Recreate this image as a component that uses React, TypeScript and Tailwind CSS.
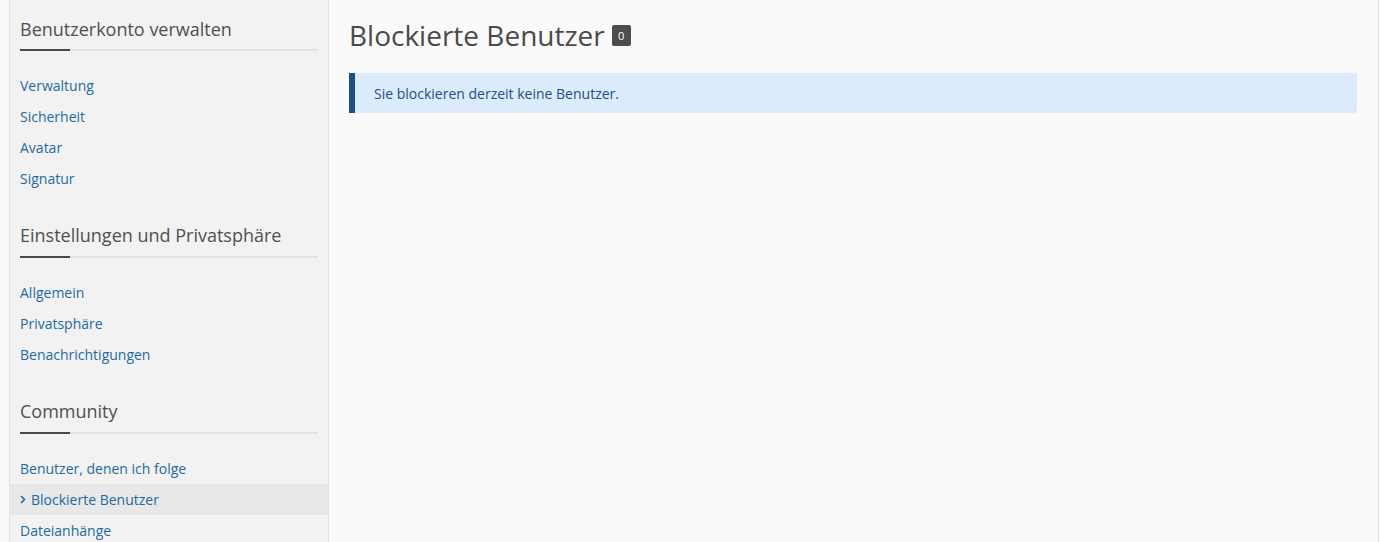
const sections = [
  {
    title: "Benutzerkonto verwalten",
    links: ["Verwaltung", "Sicherheit", "Avatar", "Signatur"],
  },
  {
    title: "Einstellungen und Privatsphäre",
    links: ["Allgemein", "Privatsphäre", "Benachrichtigungen"],
  },
  {
    title: "Community",
    links: ["Benutzer, denen ich folge", "Blockierte Benutzer", "Dateianhänge"],
  },
];

const ACTIVE = "Blockierte Benutzer";

function SidebarSection({ title, links, first }: { title: string; links: string[]; first: boolean }) {
  return (
    <div className={first ? "pt-[17px]" : "pt-[29px]"}>
      <div className="px-[10px]">
        <h2 className={`text-[18px] leading-[24px] text-[#505050] ${first ? "pb-[8px]" : "pb-[9px]"}`}>{title}</h2>
        <div className="flex h-[2px]">
          <div className="w-[50px] bg-[#4a4a4a]" />
          <div className="flex-1 bg-[#e3e3e3]" />
        </div>
      </div>
      <ul className="mt-[19px]">
        {links.map((link) => (
          <li
            key={link}
            className={`h-[31px] flex items-center px-[10px] text-[14px] text-[#1d6aa5] ${
              link === ACTIVE ? "bg-[#e8e8e8]" : ""
            }`}
          >
            {link === ACTIVE && (
              <svg width="6" height="9" viewBox="0 0 6 9" className="mr-[5px]">
                <path d="M1 1l3.5 3.5L1 8" fill="none" stroke="#1d6aa5" strokeWidth="1.5" />
              </svg>
            )}
            <a href="#">{link}</a>
          </li>
        ))}
      </ul>
    </div>
  );
}

export default function App() {
  return (
    <div
      className="min-h-[542px] bg-[#fafafa] pl-[9px] pr-[1px]"
      style={{ fontFamily: '"Open Sans", "Liberation Sans", sans-serif' }}
    >
      <div className="flex min-h-[542px] border-l border-r border-[#e2e2e2]">
        {/* Sidebar */}
        <aside className="w-[319px] shrink-0 bg-[#f2f2f2] border-r border-[#e2e2e2]">
          {sections.map((s, i) => (
            <SidebarSection key={s.title} title={s.title} links={s.links} first={i === 0} />
          ))}
        </aside>

        {/* Main content */}
        <main className="flex-1 pl-[20px] pr-[21px] pt-[17px]">
          <h1 className="flex items-center text-[28px] leading-[36px] text-[#4a4a4a]">
            Blockierte Benutzer
            <span className="ml-[7px] inline-flex items-center justify-center w-[19px] h-[21px] rounded-[2px] bg-[#4d4d4d] text-white text-[11px] leading-none">
              0
            </span>
          </h1>
          <div className="mt-[20px] h-[40px] flex items-center bg-[#dcecfd] border-l-[6px] border-[#1b4f8c] rounded-r-[2px] pl-[19px] text-[14px] text-[#1b4f8c]">
            Sie blockieren derzeit keine Benutzer.
          </div>
        </main>
      </div>
    </div>
  );
}
